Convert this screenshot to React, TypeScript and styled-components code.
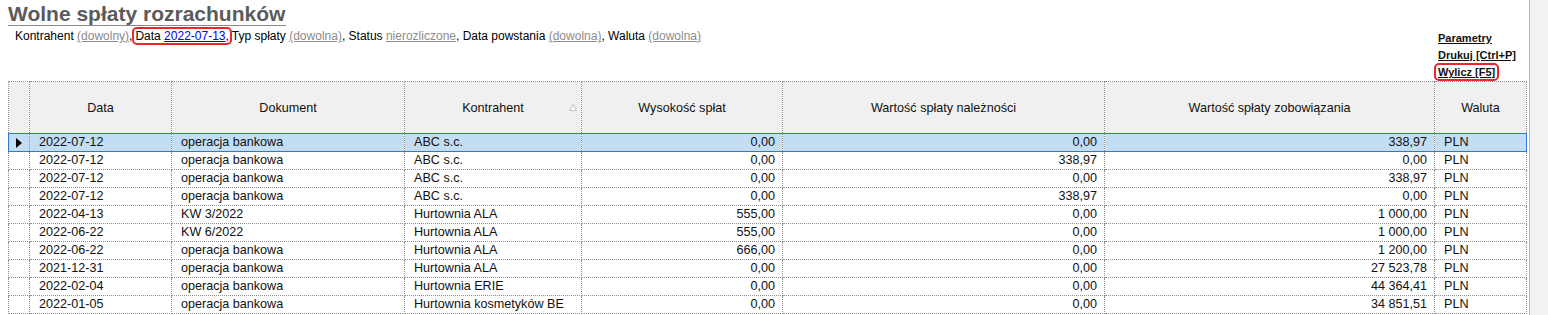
import React from 'react';
import styled, { createGlobalStyle } from 'styled-components';

const GlobalStyle = createGlobalStyle`
  html, body {
    margin: 0;
    padding: 0;
    background: #fff;
    font-family: 'Liberation Sans', Arial, sans-serif;
    font-size: 12px;
    color: #000;
    overflow: hidden;
  }
`;

const Page = styled.div`
  display: flex;
  width: 1548px;
  height: 315px;
`;

const Main = styled.div`
  width: 1521px;
  padding-left: 8px;
  overflow: hidden;
`;

const ScrollStrip = styled.div`
  flex: 1;
  border-left: 1px solid #b9b9b9;
  background: #f3f3f3;
`;

const TopBar = styled.div`
  display: flex;
  align-items: flex-start;
  width: 1518px;
`;

const Heading = styled.div`
  display: flex;
  flex-direction: column;
  align-items: flex-start;
`;

const Title = styled.h1`
  margin: 3px 0 0;
  font-size: 21px;
  line-height: 22px;
  font-weight: bold;
  color: #5b5b5b;
  border-bottom: 1px solid #8a8a8a;
  padding-right: 1px;
`;

const Filters = styled.div`
  margin-top: 2px;
  padding-left: 7px;
  line-height: 16px;
  white-space: nowrap;
`;

const Option = styled.span<{ $active?: boolean }>`
  color: ${({ $active }) => ($active ? '#0000ee' : '#8c8c8c')};
  text-decoration: underline;
`;

const Marked = styled.span`
  border: 2px solid #e8262b;
  border-radius: 5px;
  padding: 0 1px;
`;

const Actions = styled.div`
  margin-left: auto;
  width: 88px;
  padding-top: 30px;
  display: flex;
  flex-direction: column;
  align-items: flex-start;
`;

const Action = styled.span<{ $marked?: boolean }>`
  font-size: 11px;
  font-weight: bold;
  line-height: 17px;
  color: #111;
  text-decoration: underline;
  white-space: nowrap;
  ${({ $marked }) =>
    $marked &&
    `
    border: 2px solid #e8262b;
    border-radius: 5px;
    padding: 0 2px;
    margin-left: -4px;
    line-height: 14px;
    margin-top: -1px;
  `}
`;

const Grid = styled.table`
  width: 1518px;
  table-layout: fixed;
  border-collapse: collapse;
  font-size: 12.6px;
`;

const Th = styled.th`
  height: 51px;
  padding: 0;
  background: #f0f0f0;
  border: 1px dotted #8f8f8f;
  font-weight: normal;
  text-align: center;
  position: relative;
  color: #111;
`;

const Row = styled.tr<{ $selected?: boolean }>`
  background: ${({ $selected }) => ($selected ? '#c2ddf4' : '#fff')};
  & > td {
    ${({ $selected }) =>
      $selected &&
      `
      border-top: 1px solid #2a7ad4;
      border-bottom: 1px solid #2a7ad4;
    `}
  }
  & > td:first-child {
    ${({ $selected }) => $selected && 'border-left: 1px solid #2a7ad4;'}
  }
  & > td:last-child {
    ${({ $selected }) => $selected && 'border-right: 1px solid #2a7ad4;'}
  }
`;

const Td = styled.td<{ $num?: boolean }>`
  height: 17px;
  padding: 0 ${({ $num }) => ($num ? '7px 0 0' : '0 0 9px')};
  line-height: 17px;
  border: 1px dotted #8f8f8f;
  text-align: ${({ $num }) => ($num ? 'right' : 'left')};
  white-space: nowrap;
  overflow: hidden;
  color: #111;
`;

const Indicator = styled.td`
  height: 17px;
  padding: 0 0 0 7px;
  border: 1px dotted #8f8f8f;
  line-height: 0;
`;

const SortMark = styled.svg`
  position: absolute;
  right: 4px;
  top: 22px;
`;

const columns = [21, 142, 233, 177, 201, 322, 330, 92];

const rows = [
  ['2022-07-12', 'operacja bankowa', 'ABC s.c.', '0,00', '0,00', '338,97', 'PLN'],
  ['2022-07-12', 'operacja bankowa', 'ABC s.c.', '0,00', '338,97', '0,00', 'PLN'],
  ['2022-07-12', 'operacja bankowa', 'ABC s.c.', '0,00', '0,00', '338,97', 'PLN'],
  ['2022-07-12', 'operacja bankowa', 'ABC s.c.', '0,00', '338,97', '0,00', 'PLN'],
  ['2022-04-13', 'KW 3/2022', 'Hurtownia ALA', '555,00', '0,00', '1 000,00', 'PLN'],
  ['2022-06-22', 'KW 6/2022', 'Hurtownia ALA', '555,00', '0,00', '1 000,00', 'PLN'],
  ['2022-06-22', 'operacja bankowa', 'Hurtownia ALA', '666,00', '0,00', '1 200,00', 'PLN'],
  ['2021-12-31', 'operacja bankowa', 'Hurtownia ALA', '0,00', '0,00', '27 523,78', 'PLN'],
  ['2022-02-04', 'operacja bankowa', 'Hurtownia ERIE', '0,00', '0,00', '44 364,41', 'PLN'],
  ['2022-01-05', 'operacja bankowa', 'Hurtownia kosmetyków BE', '0,00', '0,00', '34 851,51', 'PLN'],
];

const numeric = [false, false, false, true, true, true, false];

const App = () => {
  return (
    <Page>
      <GlobalStyle />
      <Main>
        <TopBar>
          <Heading>
            <Title>Wolne spłaty rozrachunków</Title>
            <Filters>
              Kontrahent <Option>(dowolny)</Option>,
              <Marked>
                Data <Option $active>2022-07-13</Option>,
              </Marked>
              Typ spłaty <Option>(dowolna)</Option>, Status <Option>nierozliczone</Option>, Data
              powstania <Option>(dowolna)</Option>, Waluta <Option>(dowolna)</Option>
            </Filters>
          </Heading>
          <Actions>
            <Action>Parametry</Action>
            <Action>Drukuj [Ctrl+P]</Action>
            <Action $marked>Wylicz [F5]</Action>
          </Actions>
        </TopBar>
        <Grid>
          <colgroup>
            {columns.map((w, i) => (
              <col key={i} style={{ width: w }} />
            ))}
          </colgroup>
          <thead>
            <tr>
              <Th />
              <Th>Data</Th>
              <Th>Dokument</Th>
              <Th>
                Kontrahent
                <SortMark width="8" height="7" viewBox="0 0 8 7">
                  <path d="M4 0.5 L7.5 6.5 L0.5 6.5 Z" fill="#fff" stroke="#c4c4c4" strokeWidth="1" />
                </SortMark>
              </Th>
              <Th>Wysokość spłat</Th>
              <Th>Wartość spłaty należności</Th>
              <Th>Wartość spłaty zobowiązania</Th>
              <Th>Waluta</Th>
            </tr>
          </thead>
          <tbody>
            {rows.map((r, i) => (
              <Row key={i} $selected={i === 0}>
                <Indicator>
                  {i === 0 && (
                    <svg width="7" height="10" viewBox="0 0 7 10">
                      <path d="M0 0 L6 5 L0 10 Z" fill="#000" />
                    </svg>
                  )}
                </Indicator>
                {r.map((c, j) => (
                  <Td key={j} $num={numeric[j]}>
                    {c}
                  </Td>
                ))}
              </Row>
            ))}
          </tbody>
        </Grid>
      </Main>
      <ScrollStrip />
    </Page>
  );
};

export default App;
